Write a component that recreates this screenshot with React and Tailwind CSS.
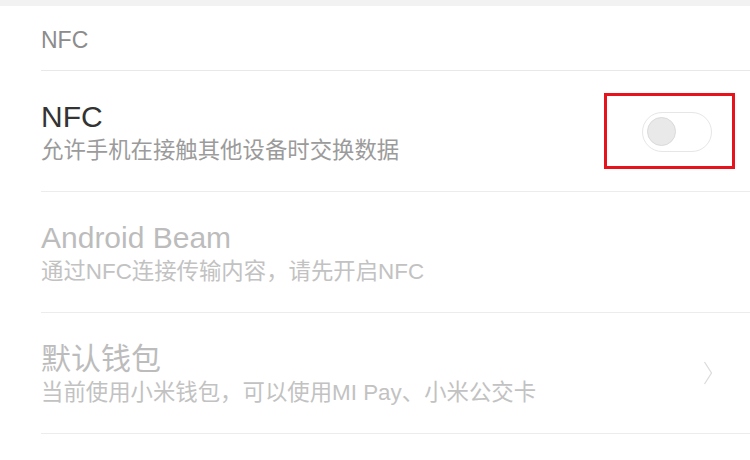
import React from "react";

const rows = [
  {
    id: "nfc",
    title: "NFC",
    desc: "允许手机在接触其他设备时交换数据",
    enabled: true,
    control: "switch",
  },
  {
    id: "beam",
    title: "Android Beam",
    desc: "通过NFC连接传输内容，请先开启NFC",
    enabled: false,
  },
  {
    id: "wallet",
    title: "默认钱包",
    desc: "当前使用小米钱包，可以使用MI Pay、小米公交卡",
    enabled: false,
    control: "arrow",
  },
];

const Switch = () => (
  // highlighted toggle (the red box is the screenshot's annotation)
  <div className="mr-[15px] flex h-[76px] w-[131px] items-center border-[3px] border-[#e8121c] pl-[35px] pt-[1px]">
    <div className="flex h-[40px] w-[70px] items-center rounded-full border-[1.5px] border-[#e6e6e6] bg-white pl-[4px]">
      <div className="h-[29px] w-[29px] rounded-full border border-[#dadada] bg-[#e9e9e9]" />
    </div>
  </div>
);

const Arrow = () => (
  <svg
    width="10"
    height="24"
    viewBox="0 0 10 24"
    className="mr-[37px]"
    fill="none"
    stroke="#dcdcdc"
    strokeWidth="1.3"
  >
    <path d="M1.5 1 L8.5 12 L1.5 23" />
  </svg>
);

const Row = ({ row }) => (
  <div className="ml-[41px] flex items-center border-b border-[#ececec]">
    <div className="flex-1 pb-[24px] pt-[28px]">
      <div
        className={`text-[30px] leading-[36px] ${
          row.enabled ? "text-[#333333]" : "text-[#bcbcbc]"
        }`}
      >
        {row.title}
      </div>
      <div
        className={`text-[22.4px] leading-[32px] ${
          row.enabled ? "text-[#9b9b9b]" : "text-[#c2c2c2]"
        }`}
      >
        {row.desc}
      </div>
    </div>
    {row.control === "switch" && <Switch />}
    {row.control === "arrow" && <Arrow />}
  </div>
);

export default function App() {
  return (
    <div
      className="h-[460px] w-[750px] overflow-hidden bg-white"
      style={{ fontFamily: '"Liberation Sans", "Noto Sans CJK SC", sans-serif' }}
    >
      <div className="h-[6px] bg-[#f2f2f2]" />

      {/* Section header */}
      <div className="ml-[41px] border-b border-[#e8e8e8] pb-[15px] pt-[19px]">
        <div className="text-[23px] leading-[30px] text-[#8c8c8c]">NFC</div>
      </div>

      {rows.map((row) => (
        <Row key={row.id} row={row} />
      ))}
    </div>
  );
}
